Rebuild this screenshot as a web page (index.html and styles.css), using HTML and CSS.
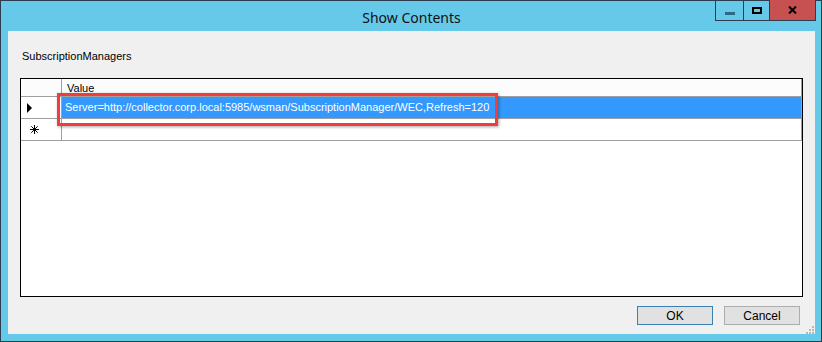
FILE: index.html
```html
<!DOCTYPE html>
<html>
<head>
<meta charset="utf-8">
<link rel="stylesheet" href="styles.css">
</head>
<body>
<div class="window">
  <div class="titlebar">
    <span class="title">Show Contents</span>
    <div class="caption">
      <div class="cbtn min"><span class="min-bar"></span></div>
      <div class="cbtn max"><span class="max-box"></span></div>
      <div class="cbtn close">
        <svg width="9" height="8" viewBox="0 0 9 8"><path d="M1 0.5 L8 7.5 M8 0.5 L1 7.5" stroke="#000" stroke-width="2"/></svg>
      </div>
    </div>
  </div>
  <div class="client">
    <div class="label">SubscriptionManagers</div>
    <div class="grid">
      <div class="row head">
        <div class="rh"></div>
        <div class="cell">Value</div>
      </div>
      <div class="row sel">
        <div class="rh"><span class="arrow"></span></div>
        <div class="cell">Server=http://collector.corp.local:5985/wsman/SubscriptionManager/WEC,Refresh=120</div>
      </div>
      <div class="row">
        <div class="rh">
          <svg class="star" width="9" height="9" viewBox="0 0 9 9"><path d="M4.5 0 V9 M0 4.5 H9 M1.3 1.3 L7.7 7.7 M7.7 1.3 L1.3 7.7" stroke="#000" stroke-width="1"/></svg>
        </div>
        <div class="cell"></div>
      </div>
      <div class="highlight"></div>
    </div>
    <div class="footer">
      <button class="btn default">OK</button>
      <button class="btn">Cancel</button>
    </div>
    <div class="grip">
      <svg width="9" height="9" viewBox="0 0 9 9">
        <rect x="7" y="1" width="2" height="2" fill="#b8b8b8"/>
        <rect x="4" y="4" width="2" height="2" fill="#b8b8b8"/>
        <rect x="7" y="4" width="2" height="2" fill="#b8b8b8"/>
        <rect x="1" y="7" width="2" height="2" fill="#b8b8b8"/>
        <rect x="4" y="7" width="2" height="2" fill="#b8b8b8"/>
        <rect x="7" y="7" width="2" height="2" fill="#b8b8b8"/>
      </svg>
    </div>
  </div>
</div>
</body>
</html>
```
FILE: styles.css
```css
html, body {
  margin: 0;
  padding: 0;
  background: #ffffff;
}
.window {
  width: 822px;
  height: 342px;
  box-sizing: border-box;
  border: 1px solid #2c3d4d;
  background: #67c9ea;
  padding: 0 6px 7px 7px;
  display: flex;
  flex-direction: column;
  position: relative;
  font-family: "Liberation Sans", Arial, sans-serif;
}
.titlebar {
  height: 30px;
  display: flex;
  align-items: center;
  justify-content: center;
  flex: none;
}
.title {
  font-family: "Noto Sans", "Open Sans", sans-serif;
  font-size: 14px;
  color: #111;
  margin-top: 2px;
}
.caption {
  position: absolute;
  top: -1px;
  right: 5px;
  display: flex;
  border: 1px solid #2c3d4d;
  border-top: none;
  height: 20px;
}
.cbtn {
  height: 20px;
  display: flex;
  align-items: center;
  justify-content: center;
}
.min { width: 27px; border-right: 1px solid #2c3d4d; }
.max { width: 25px; border-right: 1px solid #2c3d4d; }
.close { width: 45px; background: #c75050; }
.min-bar {
  width: 10px;
  height: 3px;
  background: #2c6a84;
  margin-top: 6px;
}
.max-box {
  width: 6px;
  height: 3px;
  border: 2px solid #000;
}
.client {
  flex: 1;
  background: #f0f0f0;
  position: relative;
  display: flex;
  flex-direction: column;
  padding: 0 12px;
  font-size: 11px;
  color: #000;
}
.label {
  padding: 19px 0 0 2px;
  height: 13px;
  line-height: 13px;
}
.grid {
  margin-top: 15px;
  width: 783px;
  height: 219px;
  box-sizing: border-box;
  border: 1px solid #000;
  background: #fff;
  position: relative;
}
.row {
  display: flex;
  height: 22px;
  box-sizing: border-box;
  border-bottom: 1px solid #a0a0a0;
  width: 781px;
}
.row.head {
  height: 18px;
  background: #fcfcfc;
}
.rh {
  width: 41px;
  flex: none;
  box-sizing: border-box;
  border-right: 1px solid #a0a0a0;
  display: flex;
  align-items: center;
  padding-left: 6px;
}
.cell {
  width: 740px;
  box-sizing: border-box;
  border-right: 1px solid #a0a0a0;
  padding-left: 5px;
  line-height: 21px;
  white-space: nowrap;
}
.head .cell {
  line-height: 18px;
}
.sel .cell {
  background: #3399ff;
  color: #fff;
  padding-left: 3px;
}
.arrow {
  width: 0;
  height: 0;
  border-left: 5px solid #000;
  border-top: 5px solid transparent;
  border-bottom: 5px solid transparent;
}
.star {
  margin-left: 3px;
}
.highlight {
  position: absolute;
  left: 36px;
  top: 14px;
  width: 441px;
  height: 33px;
  box-sizing: border-box;
  border: 3px solid #f03c3c;
  box-shadow: 1px 1px 3px rgba(0,0,0,0.35);
}
.footer {
  display: flex;
  justify-content: flex-end;
  gap: 11px;
  margin-top: 9px;
  padding-right: 3px;
}
.btn {
  width: 76px;
  height: 19px;
  box-sizing: border-box;
  background: #e1e1e1;
  border: 1px solid #adadad;
  font-family: "Liberation Sans", Arial, sans-serif;
  font-size: 12px;
  color: #000;
  padding: 0;
}
.btn.default {
  border-color: #3c7fb1;
}
.grip {
  position: absolute;
  right: 1px;
  bottom: 0;
  line-height: 0;
}
```
